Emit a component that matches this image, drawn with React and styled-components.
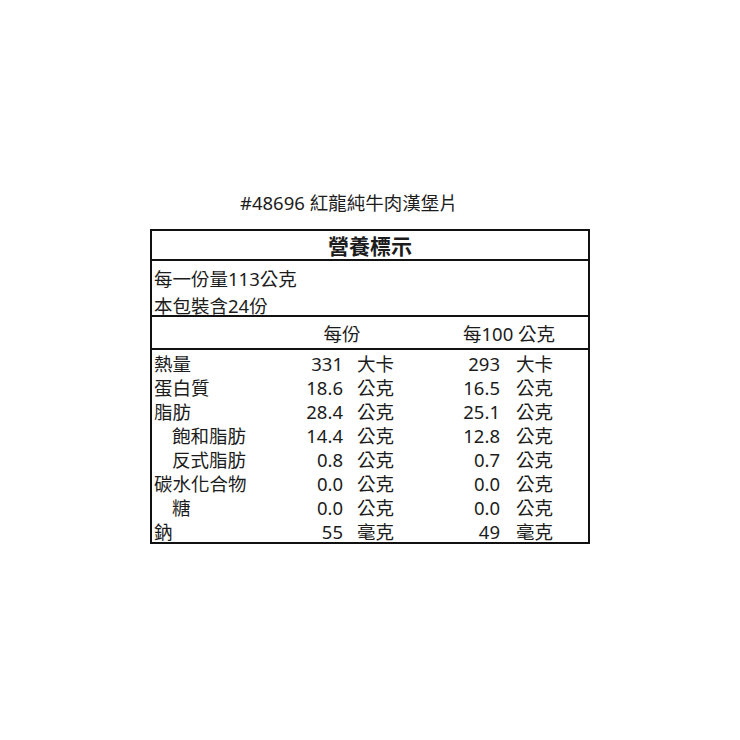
import React from 'react';
import styled, { createGlobalStyle } from 'styled-components';

const GlobalStyle = createGlobalStyle`
  html, body {
    margin: 0;
    padding: 0;
    background: #fff;
  }
  body {
    font-family: "Noto Sans", "Noto Sans CJK TC", sans-serif;
    color: #1c1c1c;
  }
`;

const Page = styled.div`
  width: 740px;
  height: 740px;
  padding: 191px 0 0 150px;
  box-sizing: border-box;
  display: flex;
  flex-direction: column;
`;

const Title = styled.div`
  padding-left: 90px;
  font-size: 18.5px;
  line-height: 24px;
  height: 38px;
`;

const Table = styled.div`
  width: 440px;
  border: 2px solid #111;
  box-sizing: border-box;
  display: flex;
  flex-direction: column;
`;

const Heading = styled.div`
  height: 28px;
  display: flex;
  align-items: center;
  justify-content: center;
  font-size: 21px;
  font-weight: 700;
  border-bottom: 2px solid #111;
`;

const Serving = styled.div`
  height: 56px;
  padding: 4px 0 0 2px;
  box-sizing: border-box;
  font-size: 18.5px;
  line-height: 27px;
  border-bottom: 2px solid #111;
`;

const Grid = styled.div`
  display: grid;
  grid-template-columns: 136px 55px 65px 92px 1fr;
  align-items: center;
  font-size: 18.5px;
  height: ${p => p.$h}px;
`;

const ColHeader = styled(Grid)`
  border-bottom: 2px solid #111;
`;

const Body = styled.div`
  display: flex;
  flex-direction: column;
`;

const Label = styled.div`
  padding-left: ${p => (p.$indent ? 20 : 2)}px;
  white-space: nowrap;
`;

const Value = styled.div`
  text-align: right;
  white-space: nowrap;
`;

const Unit = styled.div`
  padding-left: ${p => p.$pad}px;
  white-space: nowrap;
`;

const HeadCell = styled.div`
  grid-column: ${p => p.$span};
  text-align: ${p => p.$align};
  padding-left: ${p => p.$pad || 0}px;
  padding-right: ${p => p.$padR || 0}px;
  white-space: nowrap;
`;

const rows = [
  { name: '熱量', a: '331', ua: '大卡', b: '293', ub: '大卡' },
  { name: '蛋白質', a: '18.6', ua: '公克', b: '16.5', ub: '公克' },
  { name: '脂肪', a: '28.4', ua: '公克', b: '25.1', ub: '公克' },
  { name: '飽和脂肪', indent: true, a: '14.4', ua: '公克', b: '12.8', ub: '公克' },
  { name: '反式脂肪', indent: true, a: '0.8', ua: '公克', b: '0.7', ub: '公克' },
  { name: '碳水化合物', a: '0.0', ua: '公克', b: '0.0', ub: '公克' },
  { name: '糖', indent: true, a: '0.0', ua: '公克', b: '0.0', ub: '公克' },
  { name: '鈉', a: '55', ua: '毫克', b: '49', ub: '毫克' },
];

export default function App() {
  return (
    <>
      <GlobalStyle />
      <Page>
        <Title>#48696 紅龍純牛肉漢堡片</Title>
        <Table>
          <Heading>營養標示</Heading>
          <Serving>
            <div>每一份量113公克</div>
            <div>本包裝含24份</div>
          </Serving>
          <ColHeader $h={31}>
            <HeadCell $span="2 / 4" $align="center" $padR={12}>每份</HeadCell>
            <HeadCell $span="4 / 6" $align="left" $pad={55}>每100 公克</HeadCell>
          </ColHeader>
          <Body>
            {rows.map(r => (
              <Grid key={r.name} $h={24}>
                <Label $indent={r.indent}>{r.name}</Label>
                <Value>{r.a}</Value>
                <Unit $pad={14}>{r.ua}</Unit>
                <Value>{r.b}</Value>
                <Unit $pad={16}>{r.ub}</Unit>
              </Grid>
            ))}
          </Body>
        </Table>
      </Page>
    </>
  );
}
